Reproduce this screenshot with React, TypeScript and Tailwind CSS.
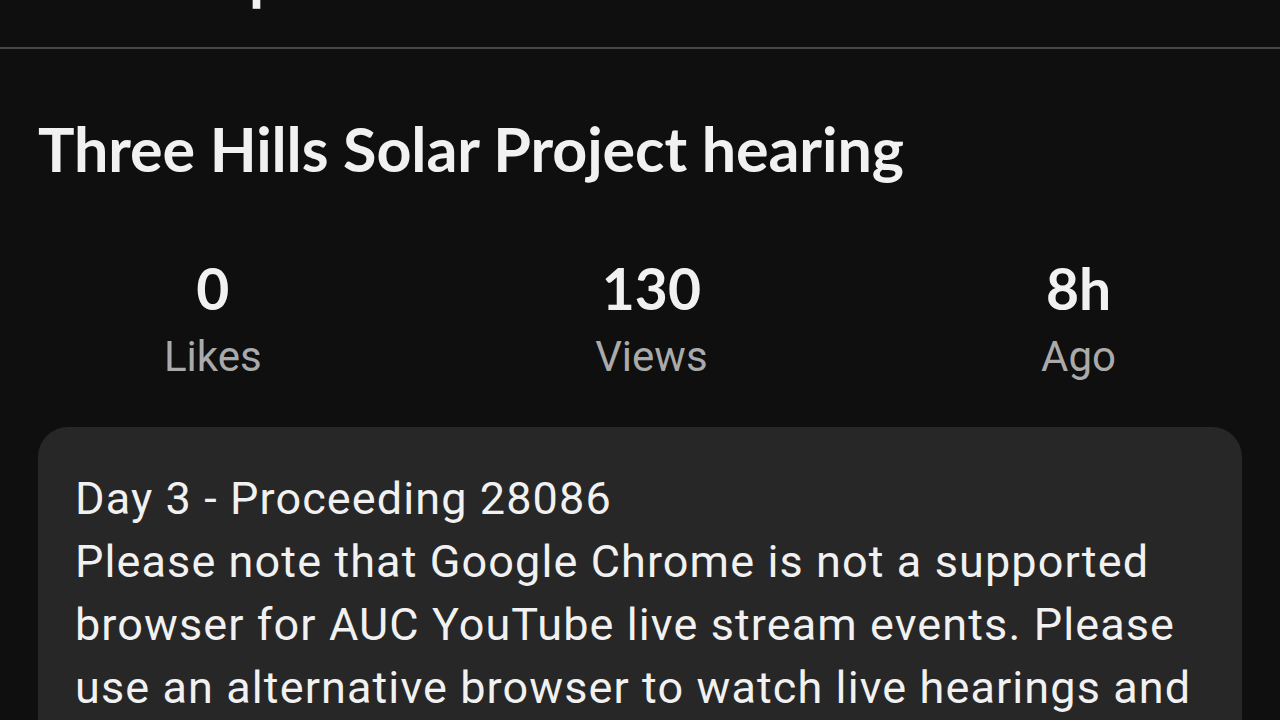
import React from "react";

const stats = [
  { value: "0", label: "Likes" },
  { value: "130", label: "Views" },
  { value: "8h", label: "Ago" },
];

const App = () => {
  return (
    <div className="h-[720px] w-full overflow-hidden bg-[#0f0f0f] text-[#f1f1f1]">
      <header className="h-[49px] overflow-hidden border-b-2 border-[#474747] px-[40px]">
        <h2 className="-mt-[55px] ml-[36px] font-['Lato',sans-serif] font-bold text-[61px] leading-[62px]">
          Description
        </h2>
      </header>

      <section className="px-[38px]">
        <h1 className="mt-[69px] font-['Lato',sans-serif] font-bold text-[61px] leading-[62px] tracking-[-0.1px]">
          Three Hills Solar Project hearing
        </h1>

        <div className="mt-[79px] flex justify-between px-[126px]">
          {stats.map((s) => (
            <div key={s.label} className="flex flex-col items-center">
              <span className="font-['Lato',sans-serif] font-bold text-[57px] leading-[59px]">
                {s.value}
              </span>
              <span className="mt-[15px] font-['Roboto',sans-serif] text-[42px] leading-[48px] text-[#aaaaaa]">
                {s.label}
              </span>
            </div>
          ))}
        </div>

        <div className="mt-[46px] rounded-[30px] bg-[#272727] px-[37px] pt-[40px] pb-[40px] font-['Roboto',sans-serif] text-[45px] leading-[63px] tracking-[1.1px]">
          <p>Day 3 - Proceeding 28086</p>
          <p>
            Please note that Google Chrome is not a supported browser for AUC YouTube live stream events.
            Please use an alternative browser to watch live hearings and proceedings on our channel.
          </p>
        </div>
      </section>
    </div>
  );
};

export default App;
